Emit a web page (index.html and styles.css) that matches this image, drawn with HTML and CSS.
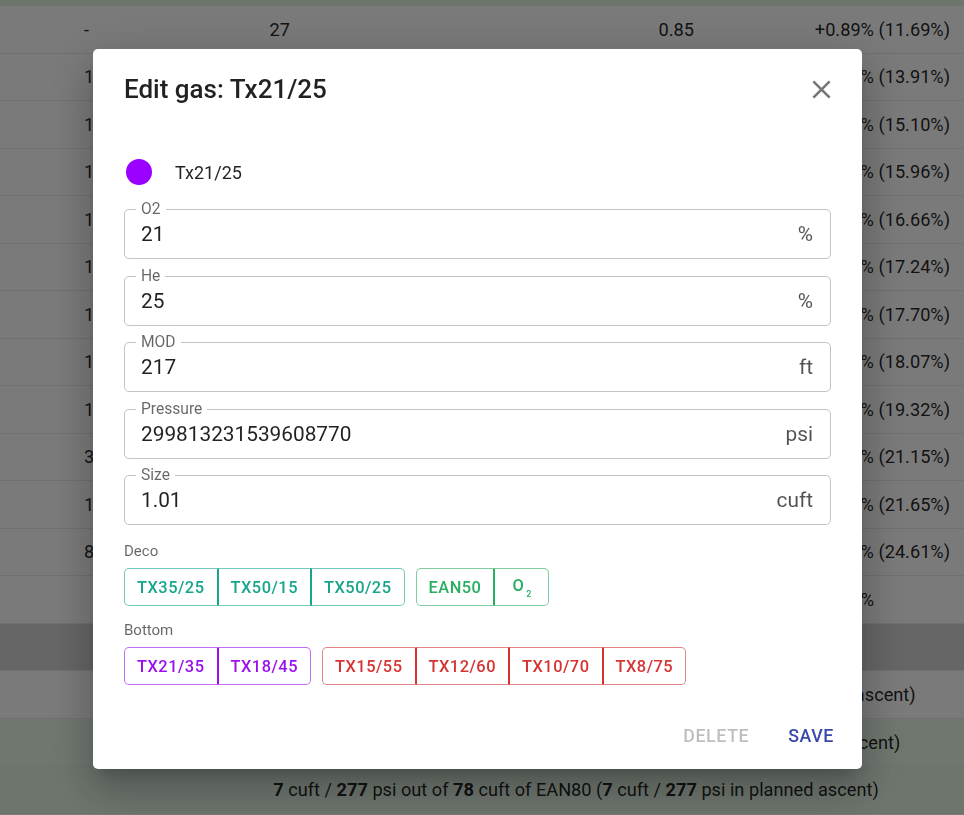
FILE: index.html
```html
<!DOCTYPE html>
<html lang="en">
<head>
    <meta charset="UTF-8">
    <meta name="viewport" content="width=device-width, initial-scale=1.0">
    <title>Edit gas</title>
    <link rel="stylesheet" href="styles.css">
</head>
<body>
    <div class="plan">
        <div class="plan-top"></div>
        <div class="row"><span>-</span><span>27</span><span>0.85</span><span>+0.89% (11.69%)</span></div>
        <div class="row"><span>1</span><span>30</span><span>0.88</span><span>+2.22% (13.91%)</span></div>
        <div class="row"><span>1</span><span>40</span><span>0.98</span><span>+1.19% (15.10%)</span></div>
        <div class="row"><span>1</span><span>50</span><span>1.09</span><span>+0.86% (15.96%)</span></div>
        <div class="row"><span>1</span><span>60</span><span>1.19</span><span>+0.70% (16.66%)</span></div>
        <div class="row"><span>1</span><span>70</span><span>1.30</span><span>+0.58% (17.24%)</span></div>
        <div class="row"><span>1</span><span>80</span><span>1.40</span><span>+0.46% (17.70%)</span></div>
        <div class="row"><span>1</span><span>90</span><span>1.51</span><span>+0.37% (18.07%)</span></div>
        <div class="row"><span>1</span><span>100</span><span>1.61</span><span>+1.25% (19.32%)</span></div>
        <div class="row"><span>3</span><span>110</span><span>1.72</span><span>+1.83% (21.15%)</span></div>
        <div class="row"><span>1</span><span>120</span><span>1.82</span><span>+0.50% (21.65%)</span></div>
        <div class="row"><span>8</span><span>130</span><span>1.93</span><span>+2.96% (24.61%)</span></div>
        <div class="row"><span></span><span></span><span></span><span class="total">24.61%</span></div>
        <div class="row row-dark"></div>
        <div class="row row-sum"><span>46 cuft / 1751 psi out of 178 cuft of TX21/25 (146 cuft / 1751 psi in planned ascent)</span></div>
        <div class="row row-sum row-green"><span>139 cuft / 740 psi out of 78 cuft of TX50/15 (39 cuft / 740 psi in planned ascent)</span></div>
        <div class="row row-sum row-green2"><span><b>7</b> cuft / <b>277</b> psi out of <b>78</b> cuft of EAN80 (<b>7</b> cuft / <b>277</b> psi in planned ascent)</span></div>
    </div>

    <div class="backdrop">
        <div class="dialog">
            <div class="dialog-title">
                <h2>Edit gas: Tx21/25</h2>
                <svg class="close" viewBox="0 0 24 24" width="31" height="31">
                    <path d="M19 6.41L17.59 5 12 10.59 6.41 5 5 6.41 10.59 12 5 17.59 6.41 19 12 13.41 17.59 19 19 17.59 13.41 12z"/>
                </svg>
            </div>
            <div class="dialog-content">
                <div class="gas-name">
                    <span class="swatch"></span>
                    <span>Tx21/25</span>
                </div>
                <div class="fields">
                    <div class="field"><label>O2</label><span class="value">21</span><span class="unit">%</span></div>
                    <div class="field"><label>He</label><span class="value">25</span><span class="unit">%</span></div>
                    <div class="field"><label>MOD</label><span class="value">217</span><span class="unit">ft</span></div>
                    <div class="field"><label>Pressure</label><span class="value">299813231539608770</span><span class="unit">psi</span></div>
                    <div class="field"><label>Size</label><span class="value">1.01</span><span class="unit">cuft</span></div>
                </div>
                <div class="preset-label">Deco</div>
                <div class="groups">
                    <div class="group teal">
                        <button class="gbtn">TX35/25</button>
                        <button class="gbtn">TX50/15</button>
                        <button class="gbtn">TX50/25</button>
                    </div>
                    <div class="group green">
                        <button class="gbtn">EAN50</button>
                        <button class="gbtn gbtn-o2">O<sub>2</sub></button>
                    </div>
                </div>
                <div class="preset-label">Bottom</div>
                <div class="groups">
                    <div class="group purple">
                        <button class="gbtn">TX21/35</button>
                        <button class="gbtn">TX18/45</button>
                    </div>
                    <div class="group red">
                        <button class="gbtn">TX15/55</button>
                        <button class="gbtn">TX12/60</button>
                        <button class="gbtn">TX10/70</button>
                        <button class="gbtn">TX8/75</button>
                    </div>
                </div>
            </div>
            <div class="dialog-actions">
                <button class="abtn delete">Delete</button>
                <button class="abtn save">Save</button>
            </div>
        </div>
    </div>
</body>
</html>
```

FILE: styles.css
```css
body {
    margin: 0;
    height: 815px;
    overflow: hidden;
    font-family: Roboto, "Noto Sans", sans-serif;
    background-color: #f5f5f5;
}
.plan-top {
    height: 6px;
    background-color: #d9edd9;
}
.row {
    display: grid;
    grid-template-columns: 106px 198px 404px 1fr;
    align-items: center;
    height: 47.5px;
    box-sizing: border-box;
    border-bottom: 1px solid #e0e0e0;
    background-color: #f5f5f5;
    color: rgba(0, 0, 0, 0.87);
    font-size: 18.2px;
}
.row span {
    text-align: right;
    padding-right: 14px;
    white-space: nowrap;
}
.row span:first-child {
    text-align: left;
    padding-left: 84px;
    padding-right: 0;
}
.row .total {
    padding-right: 90px;
}
.row-dark {
    background-color: #cccccc;
}
.row-sum {
    display: block;
    padding-left: 188px;
    line-height: 47px;
    text-align: center;
}
.row-sum span,
.row-sum span:first-child {
    padding: 0;
}
.row-green {
    background-color: #dfeedf;
}
.row-green2 {
    background-color: #dbebdb;
    border-bottom: none;
}
.backdrop {
    position: fixed;
    top: 0;
    left: 0;
    right: 0;
    bottom: 0;
    background-color: rgba(0, 0, 0, 0.5);
    display: flex;
    align-items: flex-start;
    padding: 49px 0 0 93px;
    box-sizing: border-box;
}
.dialog {
    width: 769px;
    background-color: #fff;
    border-radius: 5px;
    box-shadow: 0 11px 15px -7px rgba(0, 0, 0, 0.2), 0 24px 38px 3px rgba(0, 0, 0, 0.14), 0 9px 46px 8px rgba(0, 0, 0, 0.12);
}
.dialog-title {
    display: flex;
    justify-content: space-between;
    align-items: center;
    padding: 22px 25px 0 31px;
}
.dialog-title h2 {
    margin: 0;
    font-size: 26px;
    font-weight: 500;
    line-height: 37px;
    color: rgba(0, 0, 0, 0.87);
}
.close {
    fill: rgba(0, 0, 0, 0.54);
}
.dialog-content {
    padding: 0 31px;
}
.gas-name {
    display: flex;
    align-items: center;
    gap: 23px;
    margin-top: 51px;
    height: 26px;
    font-size: 18px;
    color: rgba(0, 0, 0, 0.87);
}
.swatch {
    width: 26px;
    height: 26px;
    margin-left: 2px;
    border-radius: 50%;
    background-color: #9900ff;
}
.fields {
    display: flex;
    flex-direction: column;
    gap: 16.5px;
    margin-top: 24px;
}
.field {
    position: relative;
    display: flex;
    align-items: center;
    height: 50px;
    padding: 0 17px 0 16px;
    box-sizing: border-box;
    border: 1px solid rgba(0, 0, 0, 0.23);
    border-radius: 5px;
    font-size: 20.8px;
}
.field label {
    position: absolute;
    top: -10px;
    left: 11px;
    padding: 0 5px;
    background-color: #fff;
    font-size: 15.6px;
    line-height: 18px;
    color: rgba(0, 0, 0, 0.6);
}
.field .value {
    flex: 1;
    color: rgba(0, 0, 0, 0.87);
}
.field .unit {
    color: rgba(0, 0, 0, 0.68);
}
.preset-label {
    margin-top: 16px;
    font-size: 15px;
    line-height: 20px;
    color: rgba(0, 0, 0, 0.6);
}
.preset-label + .groups {
    margin-top: 7px;
}
.groups + .preset-label {
    margin-top: 14px;
}
.groups {
    display: flex;
    gap: 11px;
}
.group {
    display: flex;
}
.gbtn {
    height: 38px;
    padding: 0 12px;
    background-color: #fff;
    border: 1px solid;
    border-color: inherit;
    color: inherit;
    font-family: Roboto, sans-serif;
    font-size: 16.4px;
    font-weight: 500;
    letter-spacing: 0.5px;
    text-transform: uppercase;
}
.gbtn:first-child {
    border-radius: 5px 0 0 5px;
}
.gbtn:last-child {
    border-radius: 0 5px 5px 0;
}
.gbtn:not(:last-child) {
    border-right: 2px solid currentColor;
}
.gbtn:not(:first-child) {
    border-left: none;
}
.gbtn-o2 {
    padding: 0 16px 0 17px;
}
.gbtn sub {
    font-size: 9px;
    vertical-align: -6px;
    margin-left: 2px;
}
.teal {
    color: #17a58b;
    border-color: rgba(23, 165, 139, 0.6);
}
.green {
    color: #27ae60;
    border-color: rgba(39, 174, 96, 0.6);
}
.purple {
    color: #9b10ee;
    border-color: rgba(155, 16, 238, 0.6);
}
.red {
    color: #d63333;
    border-color: rgba(214, 51, 51, 0.6);
}
.dialog-actions {
    display: flex;
    justify-content: flex-end;
    gap: 19px;
    margin-top: 29px;
    padding: 0 18px 13px;
}
.abtn {
    height: 42px;
    padding: 0 10px;
    background: none;
    border: none;
    font-family: Roboto, sans-serif;
    font-size: 17.8px;
    font-weight: 500;
    letter-spacing: 0.6px;
    text-transform: uppercase;
}
.delete {
    color: rgba(0, 0, 0, 0.26);
}
.save {
    color: #3949ab;
}
```
